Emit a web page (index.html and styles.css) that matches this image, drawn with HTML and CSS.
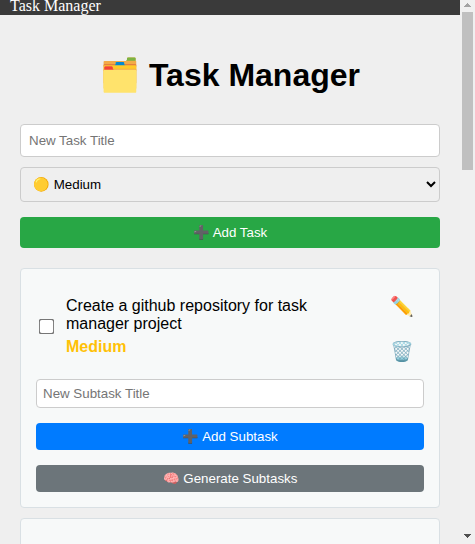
FILE: index.html
```html
<!DOCTYPE html>
<html lang="en">
<head>
<meta charset="utf-8">
<title>Task Manager</title>
<link rel="stylesheet" href="styles.css">
</head>
<body>
<div class="page">
<nav class="nav">Task Manager</nav>
<main class="container">
<h1>🗂️ Task Manager</h1>
<input class="title" type="text" placeholder="New Task Title">
<select class="priority"><option>🟡 Medium</option></select>
<button class="add">➕ Add Task</button>
<section class="card">
<div class="row">
<input class="check" type="checkbox">
<div class="text">Create a github repository for task manager project<strong>Medium</strong></div>
<div class="actions"><button>✏️</button><button>🗑️</button></div>
</div>
<input class="subtitle" type="text" placeholder="New Subtask Title">
<button class="sub blue">➕ Add Subtask</button>
<button class="sub gray">🧠 Generate Subtasks</button>
</section>
<section class="card"></section>
</main>
</div>
<div class="scrollbar">
<svg width="15" height="12" viewBox="0 0 15 12" shape-rendering="crispEdges"><path d="M7 3h1v1h1v1h1v1h1v1H4V6h1V5h1V4h1z" fill="#a3a3a3"/></svg>
<div class="thumb"></div>
<svg class="down" width="15" height="12" viewBox="0 0 15 12" shape-rendering="crispEdges"><path d="M4 2h7v1h-1v1H9v1H8v1H7V5H6V4H5V3H4z" fill="#505050"/></svg>
</div>
</body>
</html>
```
FILE: styles.css
```css
* { box-sizing: border-box; }
body { margin: 0; background: #efefef; height: 544px; overflow: hidden; display: grid; grid-template-columns: 1fr 15px; }
.page { height: 544px; overflow: hidden; }
.nav { height: 15px; background: #3a3a3a; color: #fff; padding-left: 10px; font: 16px/12px "Liberation Serif", serif; }
.container { padding: 20px; font-family: "Liberation Sans", sans-serif; }
h1 { margin: 21px 0 30px; font-size: 32px; line-height: 38px; text-align: center; }
input, select, button { font-family: inherit; font-size: 13.333px; display: block; }
.title, .priority, .add { width: 100%; }
.title { height: 33px; padding: 8px; border: 1px solid #ccc; border-radius: 4px; }
.priority { height: 35px; margin-top: 10px; padding: 8px; border: 1px solid #ccc; border-radius: 4px; background-color: #efefef; }
button { border: 0; color: #fff; border-radius: 4px; }
.add { height: 31px; margin: 15px 0 20px; background: #28a745; }
.card { height: 240px; border: 1px solid #d9e0e4; border-radius: 4px; background: #f7f9f9; padding: 15px; margin-bottom: 10px; }
.row { display: flex; align-items: center; height: 85px; }
.check { width: 13px; height: 13px; margin: 0 13px 0 4px; flex: none; transform: scale(1.2); }
.text { width: 270px; font-size: 16px; line-height: 18px; }
.text strong { display: block; color: #ffc107; margin-top: 5px; }
.actions { margin-left: auto; padding-top: 4px; }
.actions button { background: none; font-size: 19.2px; height: 45px; width: 44px; }
.subtitle { width: 100%; height: 29px; padding: 6px; border: 1px solid #ccc; border-radius: 4px; margin-top: 10px; }
.sub { width: 100%; height: 27px; margin-top: 15px; }
.blue { background: #007bff; }
.gray { background: #6c757a; }
.scrollbar { height: 544px; display: flex; flex-direction: column; background: #f0f0f0; }
.scrollbar svg { display: block; flex: none; }
.thumb { width: 11px; height: 158px; margin-left: 2px; background: #c0c0c0; }
.down { margin-top: auto; }
```
